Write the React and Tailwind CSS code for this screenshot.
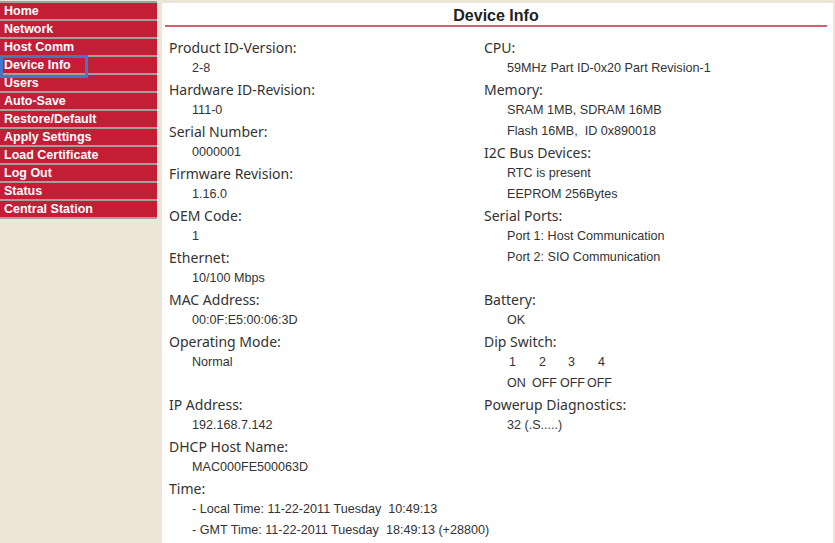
import React from "react";

const menu = [
  "Home",
  "Network",
  "Host Comm",
  "Device Info",
  "Users",
  "Auto-Save",
  "Restore/Default",
  "Apply Settings",
  "Load Certificate",
  "Log Out",
  "Status",
  "Central Station",
];

// each entry is one 21px table row; "l" = label, "v" = value, null = empty row
const leftRows = [
  ["l", "Product ID-Version:"],
  ["v", "2-8"],
  ["l", "Hardware ID-Revision:"],
  ["v", "111-0"],
  ["l", "Serial Number:"],
  ["v", "0000001"],
  ["l", "Firmware Revision:"],
  ["v", "1.16.0"],
  ["l", "OEM Code:"],
  ["v", "1"],
  ["l", "Ethernet:"],
  ["v", "10/100 Mbps"],
  ["l", "MAC Address:"],
  ["v", "00:0F:E5:00:06:3D"],
  ["l", "Operating Mode:"],
  ["v", "Normal"],
  null,
  ["l", "IP Address:"],
  ["v", "192.168.7.142"],
  ["l", "DHCP Host Name:"],
  ["v", "MAC000FE500063D"],
  ["l", "Time:"],
  ["v", "- Local Time: 11-22-2011 Tuesday\u00a0\u00a010:49:13"],
  ["v", "- GMT Time: 11-22-2011 Tuesday\u00a0\u00a018:49:13 (+28800)"],
];

const rightRows = [
  ["l", "CPU:"],
  ["v", "59MHz Part ID-0x20 Part Revision-1"],
  ["l", "Memory:"],
  ["v", "SRAM 1MB, SDRAM 16MB"],
  ["v", "Flash 16MB,\u00a0\u00a0ID 0x890018"],
  ["l", "I2C Bus Devices:"],
  ["v", "RTC is present"],
  ["v", "EEPROM 256Bytes"],
  ["l", "Serial Ports:"],
  ["v", "Port 1: Host Communication"],
  ["v", "Port 2: SIO Communication"],
  null,
  ["l", "Battery:"],
  ["v", "OK"],
  ["l", "Dip Switch:"],
  ["dipnum"],
  ["dipstate"],
  ["l", "Powerup Diagnostics:"],
  ["v", "32 (.S.....)"],
];

const Cell = ({ row }) => {
  if (!row) return <div className="h-[21px]" />;
  const [kind, text] = row;
  if (kind === "l")
    return (
      <div className="h-[21px] leading-[21px] text-[14px] text-[#333] font-['Noto_Sans',sans-serif] whitespace-nowrap">
        {text}
      </div>
    );
  if (kind === "dipnum")
    return (
      <div className="h-[21px] leading-[21px] pl-[25px] flex text-[12.5px] text-[#333] font-['Liberation_Sans',Arial,sans-serif]">
        <span className="w-[30px]">1</span>
        <span className="w-[29px]">2</span>
        <span className="w-[30px]">3</span>
        <span>4</span>
      </div>
    );
  if (kind === "dipstate")
    return (
      <div className="h-[21px] leading-[21px] pl-[23px] flex text-[12.5px] text-[#333] font-['Liberation_Sans',Arial,sans-serif]">
        <span className="w-[25px]">ON</span>
        <span className="w-[28px]">OFF</span>
        <span className="w-[27px]">OFF</span>
        <span>OFF</span>
      </div>
    );
  return (
    <div className="h-[21px] leading-[21px] pl-[23px] text-[12.6px] text-[#333] font-['Liberation_Sans',Arial,sans-serif] whitespace-nowrap">
      {text}
    </div>
  );
};

export default function App() {
  return (
    <div className="w-[835px] h-[543px] bg-[#ede5d8] flex overflow-hidden">
      {/* Side menu */}
      <nav className="w-[162px] shrink-0 pt-[1px] pr-[5px]">
        <div className="border-b-2 border-[#a89c9c]">
          {menu.map((item) => (
            <div
              key={item}
              className="relative h-[18px] border-t-2 border-[#a89c9c] bg-[#c41d36] pl-[4px] text-[12.5px] leading-[16px] font-bold text-white font-['Liberation_Sans',Arial,sans-serif]"
            >
              {item}
              {item === "Device Info" && (
                <div className="absolute z-10 left-0 -top-[2px] w-[88px] h-[23px] border-[3px] border-[#3f78c6]" />
              )}
            </div>
          ))}
        </div>
      </nav>

      {/* Content */}
      <main className="flex-1 bg-white mt-[3px] mr-[2px] px-[3px]">
        <div className="border-b-2 border-[#d4606e] mr-[3px]">
          <h1 className="h-[22px] pt-[4px] text-center text-[16px] leading-[18px] font-bold text-[#222] font-['Liberation_Sans',Arial,sans-serif]">
            Device Info
          </h1>
        </div>
        <div className="flex pt-[10px] pl-[4px]">
          <div className="w-[315px]">
            {leftRows.map((row, i) => (
              <Cell key={i} row={row} />
            ))}
          </div>
          <div className="flex-1">
            {rightRows.map((row, i) => (
              <Cell key={i} row={row} />
            ))}
          </div>
        </div>
      </main>
    </div>
  );
}
